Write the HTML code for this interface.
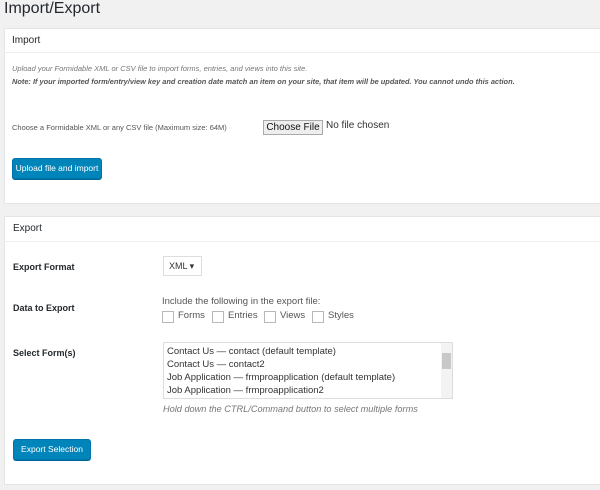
<!DOCTYPE html>
<html><head><style>
body{margin:0;width:600px;height:490px;background:#f1f1f1;font-family:"Liberation Sans",sans-serif;color:#444;overflow:hidden;position:relative}
.a{position:absolute;white-space:nowrap}
.box{position:absolute;left:4px;width:610px;background:#fff;border:1px solid #e5e5e5}
.btn{position:absolute;background:#0085ba;border:1px solid #0073aa;border-radius:3px;color:#fff;font-size:8.5px;text-align:center;box-shadow:0 1px 0 #006799;white-space:nowrap}
.cb{position:absolute;width:10px;height:10px;border:1px solid #b4b9be;background:#fff;top:311px}
</style></head><body>
<div class="a" style="left:4px;top:0px;font-size:16px;color:#23282d">Import/Export</div>
<div class="box" style="top:28px;height:174px"></div>
<div class="a" style="left:4px;top:52px;width:600px;border-top:1px solid #eee"></div>
<div class="a" style="left:12px;top:35px;font-size:10px;color:#23282d">Import</div>
<div class="a" style="left:12px;top:64px;font-size:7.5px;font-style:italic;color:#777">Upload your Formidable XML or CSV file to import forms, entries, and views into this site.</div>
<div class="a" style="left:12px;top:77px;font-size:7.4px;font-style:italic;font-weight:bold;color:#555">Note: If your imported form/entry/view key and creation date match an item on your site, that item will be updated. You cannot undo this action.</div>
<div class="a" style="left:12px;top:123px;font-size:7.5px;color:#555">Choose a Formidable XML or any CSV file (Maximum size: 64M)</div>
<div class="a" style="left:263px;top:120px;width:58px;height:13px;border:1px solid #aaa;background:#eee;font-size:10px;color:#111;text-align:center;line-height:13px">Choose File</div>
<div class="a" style="left:326px;top:120px;font-size:10px;color:#333">No file chosen</div>
<div class="btn" style="left:12px;top:158px;width:88px;height:19px;line-height:19px">Upload file and import</div>

<div class="box" style="top:216px;height:267px"></div>
<div class="a" style="left:4px;top:241px;width:600px;border-top:1px solid #eee"></div>
<div class="a" style="left:13px;top:223px;font-size:10px;color:#23282d">Export</div>
<div class="a" style="left:13px;top:262px;font-size:9px;font-weight:bold;color:#23282d">Export Format</div>
<div class="a" style="left:163px;top:256px;width:37px;height:18px;border:1px solid #ddd;font-size:9px;line-height:18px;text-indent:5px;color:#333">XML &#9662;</div>
<div class="a" style="left:13px;top:303px;font-size:9px;font-weight:bold;color:#23282d">Data to Export</div>
<div class="a" style="left:162px;top:296px;font-size:9.5px;color:#555">Include the following in the export file:</div>
<div class="cb" style="left:162px"></div><div class="a" style="left:178px;top:310px;font-size:9.5px;color:#555">Forms</div>
<div class="cb" style="left:212px"></div><div class="a" style="left:228px;top:310px;font-size:9.5px;color:#555">Entries</div>
<div class="cb" style="left:264px"></div><div class="a" style="left:280px;top:310px;font-size:9.5px;color:#555">Views</div>
<div class="cb" style="left:312px"></div><div class="a" style="left:328px;top:310px;font-size:9.5px;color:#555">Styles</div>
<div class="a" style="left:13px;top:348px;font-size:9px;font-weight:bold;color:#23282d">Select Form(s)</div>
<div class="a" style="left:163px;top:342px;width:288px;height:55px;border:1px solid #ddd;font-size:9.5px;color:#333;line-height:13px">
<div style="padding:2px 3px">Contact Us — contact (default template)<br>Contact Us — contact2<br>Job Application — frmproapplication (default template)<br>Job Application — frmproapplication2</div>
<div style="position:absolute;right:0;top:0;width:11px;height:55px;background:#f3f3f3"><div style="margin:10px 1px 0;height:16px;background:#c8c8c8"></div></div></div>
<div class="a" style="left:163px;top:404px;font-size:9.2px;font-style:italic;color:#777">Hold down the CTRL/Command button to select multiple forms</div>
<div class="btn" style="left:13px;top:439px;width:76px;height:19px;line-height:19px">Export Selection</div>
</body></html>
